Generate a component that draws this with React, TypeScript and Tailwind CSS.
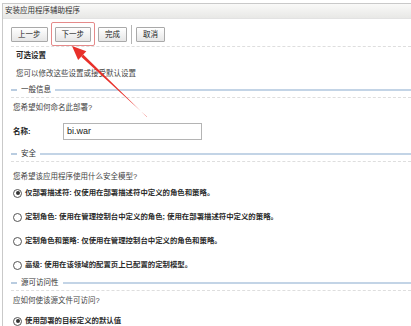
const cjk = "font-['Liberation_Sans','Noto_Sans_CJK_SC',sans-serif]";

function Btn({ label }: { label: string }) {
  return (
    <div className="h-[15px] px-[6px] flex items-center border border-[#a9a9a9] rounded-[1px] bg-gradient-to-b from-[#ffffff] to-[#e6e6e6] text-[7.5px] text-[#222]">
      {label}
    </div>
  );
}

function SectionHeader({ title, mt }: { title: string; mt: string }) {
  return (
    <div className={mt}>
      <div className="h-[14px] flex items-center pl-[8px]">
        <div className="w-[6px] h-[1.5px] bg-[#b9cce0]" />
        <span className="mx-[4px] text-[7.5px] text-[#333]">{title}</span>
        <div className="flex-1 h-[2px] bg-[#c3d4e6]" />
      </div>
      <div className="ml-[8px] border-t border-dashed border-[#dedede]" />
    </div>
  );
}

function Radio({ checked, label }: { checked?: boolean; label: string }) {
  return (
    <div className="h-[14px] flex items-center pl-[10px]">
      <div className="w-[9px] h-[9px] rounded-full border border-[#555] bg-white flex items-center justify-center">
        {checked && <div className="w-[4px] h-[4px] rounded-full bg-[#333]" />}
      </div>
      <span className="ml-[3px] text-[7.4px] font-bold text-[#2a2a2a] whitespace-nowrap">{label}</span>
    </div>
  );
}

export default function App() {
  return (
    <div className={`relative w-[411px] h-[326px] overflow-hidden bg-white ${cjk}`}>
      <div className="mt-[3px] ml-[2px] h-full border-l border-t border-[#c9c9c9]">
        <div className="h-[15px] flex items-center pl-[2px] bg-gradient-to-b from-[#f9f9f8] to-[#e8e8e6] border-b border-[#e2e2e2] text-[7.5px] text-[#333]">
          安装应用程序辅助程序
        </div>

        <div className="mt-[8px] ml-[8px] flex items-center h-[15px]">
          <Btn label="上一步" />
          <div className="relative ml-[7px]">
            <div className="absolute left-[-4px] right-[-4px] top-[-5px] bottom-[-4px] border border-[#e58a8a] rounded-[2px]" />
            <Btn label="下一步" />
          </div>
          <div className="ml-[7px]">
            <Btn label="完成" />
          </div>
          <div className="mx-[4px] w-px h-[19px] bg-[#b5b5b5]" />
          <Btn label="取消" />
        </div>

        <div className="mt-[4px] ml-[8px] border-t border-dashed border-[#dedede]" />

        <div className="h-[18px] flex items-center pl-[13px] text-[7.5px] font-bold text-[#222]">可选设置</div>
        <div className="h-[18px] flex items-center pl-[13px] text-[7.5px] text-[#444]">您可以修改这些设置或接受默认设置</div>

        <SectionHeader title="一般信息" mt="mt-0" />

        <div className="h-[20px] flex items-center pl-[10px] text-[7.5px] text-[#444]">您希望如何命名此部署?</div>
        <div className="mt-[5px] h-[17px] flex items-center pl-[10px]">
          <span className="w-[50px] text-[7.5px] font-bold text-[#222]">名称:</span>
          <div className="w-[139px] h-[17px] border border-[#b4b4b4] flex items-center pl-[3px] text-[9px] text-[#222] font-['Liberation_Sans',sans-serif]">
            bi.war
          </div>
        </div>

        <SectionHeader title="安全" mt="mt-[7px]" />

        <div className="mt-[8px] h-[14px] flex items-center pl-[10px] text-[7.5px] text-[#444]">您希望该应用程序使用什么安全模型?</div>
        <div className="mt-[2px] flex flex-col gap-[10px]">
          <Radio checked label="仅部署描述符: 仅使用在部署描述符中定义的角色和策略。" />
          <Radio label="定制角色: 使用在管理控制台中定义的角色; 使用在部署描述符中定义的策略。" />
          <Radio label="定制角色和策略: 仅使用在管理控制台中定义的角色和策略。" />
          <Radio label="高级: 使用在该领域的配置页上已配置的定制模型。" />
        </div>

        <SectionHeader title="源可访问性" mt="mt-[4px]" />

        <div className="mt-[3px] h-[14px] flex items-center pl-[10px] text-[7.5px] text-[#444]">应如何使该源文件可访问?</div>
        <div className="mt-[6px]">
          <Radio checked label="使用部署的目标定义的默认值" />
        </div>
      </div>

      <svg className="absolute left-0 top-0" width="411" height="326" viewBox="0 0 411 326">
        <polygon points="147.3,117.4 146.7,116.6 81.2,56.7 83.2,54.5" fill="#e8302a" />
        <polygon points="72,46 86.3,51.2 78.1,60.0" fill="#e8302a" />
      </svg>
    </div>
  );
}
